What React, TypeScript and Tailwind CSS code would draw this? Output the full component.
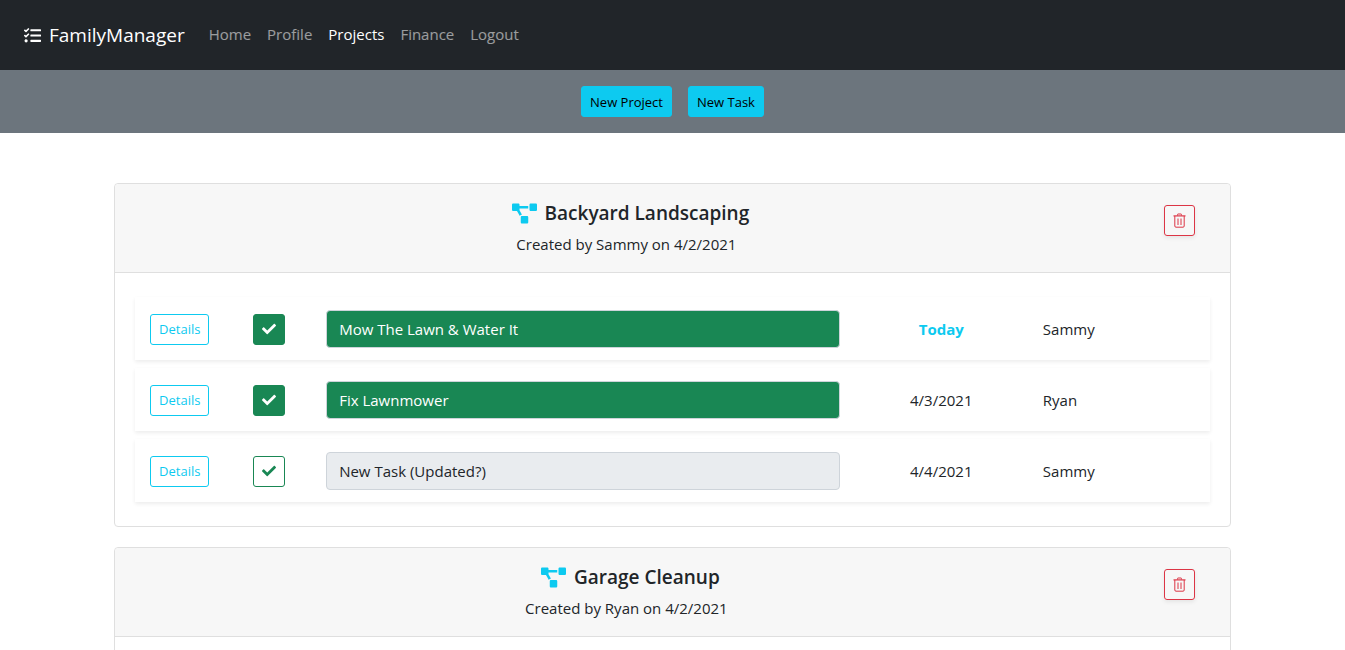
import React from 'react';
import { FaTasks, FaProjectDiagram, FaCheck } from 'react-icons/fa';

type Task = {
  id: number;
  title: string;
  done: boolean;
  due: string;
  owner: string;
};

type Project = {
  id: number;
  name: string;
  createdBy: string;
  createdOn: string;
  tasks: Task[];
};

const links = ['Home', 'Profile', 'Projects', 'Finance', 'Logout'];

const projects: Project[] = [
  {
    id: 1,
    name: 'Backyard Landscaping',
    createdBy: 'Sammy',
    createdOn: '4/2/2021',
    tasks: [
      { id: 1, title: 'Mow The Lawn & Water It', done: true, due: 'Today', owner: 'Sammy' },
      { id: 2, title: 'Fix Lawnmower', done: true, due: '4/3/2021', owner: 'Ryan' },
      { id: 3, title: 'New Task (Updated?)', done: false, due: '4/4/2021', owner: 'Sammy' },
    ],
  },
  { id: 2, name: 'Garage Cleanup', createdBy: 'Ryan', createdOn: '4/2/2021', tasks: [] },
];

function TrashIcon() {
  return (
    <svg viewBox="0 0 13 15" className="h-[15px] w-[13px]" fill="none" stroke="currentColor" aria-hidden>
      <path d="M4.5 2.5V1.5a.5.5 0 0 1 .5-.5h3a.5.5 0 0 1 .5.5v1" />
      <path d="M.5 2.9h12" strokeWidth="1.2" />
      <path d="M1.8 3v10a1.2 1.2 0 0 0 1.2 1.2h7a1.2 1.2 0 0 0 1.2-1.2V3" />
      <path d="M5 5.5v6.5M8 5.5v6.5" />
    </svg>
  );
}

function NavBar() {
  return (
    <nav className="flex h-[70px] items-center bg-[#212529] px-6">
      <a href="#" className="mr-4 flex items-center gap-2 text-[19px] text-white">
        <FaTasks className="size-[17px]" aria-hidden />
        FamilyManager
      </a>
      <ul className="flex items-center pb-0.5">
        {links.map((link) => (
          <li key={link}>
            <a
              href="#"
              className={
                link === 'Projects' ? 'px-2 text-[15px] text-white' : 'px-2 text-[15px] text-white/55'
              }
            >
              {link}
            </a>
          </li>
        ))}
      </ul>
    </nav>
  );
}

function ActionButton({ label }: { label: string }) {
  return (
    <button
      type="button"
      className="h-[31px] rounded-[3px] border border-[#0dcaf0] bg-[#0dcaf0] px-2 pt-0.5 text-[13px] text-black"
    >
      {label}
    </button>
  );
}

function TaskRow({ task }: { task: Task }) {
  return (
    <li className="grid grid-cols-12 items-center pt-[13px] pb-3 shadow-[0_2px_4px_rgba(0,0,0,0.075)]">
      <div className="flex justify-center">
        <button
          type="button"
          className="h-[31px] rounded-[3px] border border-[#0dcaf0] px-2 pt-0.5 text-[13px] text-[#0dcaf0]"
        >
          Details
        </button>
      </div>
      <div className="flex justify-center">
        <button
          type="button"
          aria-label={`Toggle ${task.title}`}
          className={
            task.done
              ? 'flex h-[31px] w-8 items-center justify-center rounded-[3px] border border-[#198754] bg-[#198754] text-white'
              : 'flex h-[31px] w-8 items-center justify-center rounded-[3px] border border-[#198754] text-[#198754]'
          }
        >
          <FaCheck className="size-3.5" aria-hidden />
        </button>
      </div>
      <div className="col-span-6 px-3">
        <input
          type="text"
          readOnly
          aria-label="Task name"
          value={task.title}
          className={
            task.done
              ? 'block h-[38px] w-full rounded border border-[#ced4da] bg-[#198754] px-3 text-[15px] text-white'
              : 'block h-[38px] w-full rounded border border-[#ced4da] bg-[#e9ecef] px-3 text-[15px] text-[#212529]'
          }
        />
      </div>
      <div
        className={
          task.due === 'Today' ? 'col-span-2 text-center font-bold text-[#0dcaf0]' : 'col-span-2 text-center'
        }
      >
        {task.due}
      </div>
      <div className="col-span-2 px-3">{task.owner}</div>
    </li>
  );
}

function ProjectCard({ project }: { project: Project }) {
  return (
    <section className="rounded border border-[#dfdfdf] bg-white">
      <header className="grid grid-cols-12 items-center rounded-t border-b border-[#dfdfdf] bg-[#f7f7f7] px-1 py-4">
        <div className="col-span-11 text-center">
          <h2 className="flex items-center justify-center gap-2 pl-2 text-[19px] leading-[26px] font-semibold">
            <FaProjectDiagram className="size-[25px] text-[#0dcaf0]" aria-hidden />
            {project.name}
          </h2>
          <p className="mt-1.5 leading-6">
            Created by {project.createdBy} on {project.createdOn}
          </p>
        </div>
        <div className="flex justify-center pb-4">
          <button
            type="button"
            aria-label={`Delete ${project.name}`}
            className="flex h-[31px] w-[31px] items-center justify-center rounded-[3px] border border-[#dc3545] text-[#dc3545] shadow-[0_2px_4px_rgba(0,0,0,0.075)]"
          >
            <TrashIcon />
          </button>
        </div>
      </header>
      <ul className="flex flex-col gap-2 px-5 py-6">
        {project.tasks.map((task) => (
          <TaskRow key={task.id} task={task} />
        ))}
      </ul>
    </section>
  );
}

export default function App() {
  return (
    <div className="min-h-screen bg-white font-['Open_Sans','Noto_Sans',sans-serif] text-[15px] text-[#212529]">
      <NavBar />
      <div className="flex justify-center gap-4 bg-[#6c757d] py-4">
        <ActionButton label="New Project" />
        <ActionButton label="New Task" />
      </div>
      <main className="mx-auto flex max-w-[1141px] flex-col gap-5 px-3 pt-[50px]">
        {projects.map((project) => (
          <ProjectCard key={project.id} project={project} />
        ))}
      </main>
    </div>
  );
}
